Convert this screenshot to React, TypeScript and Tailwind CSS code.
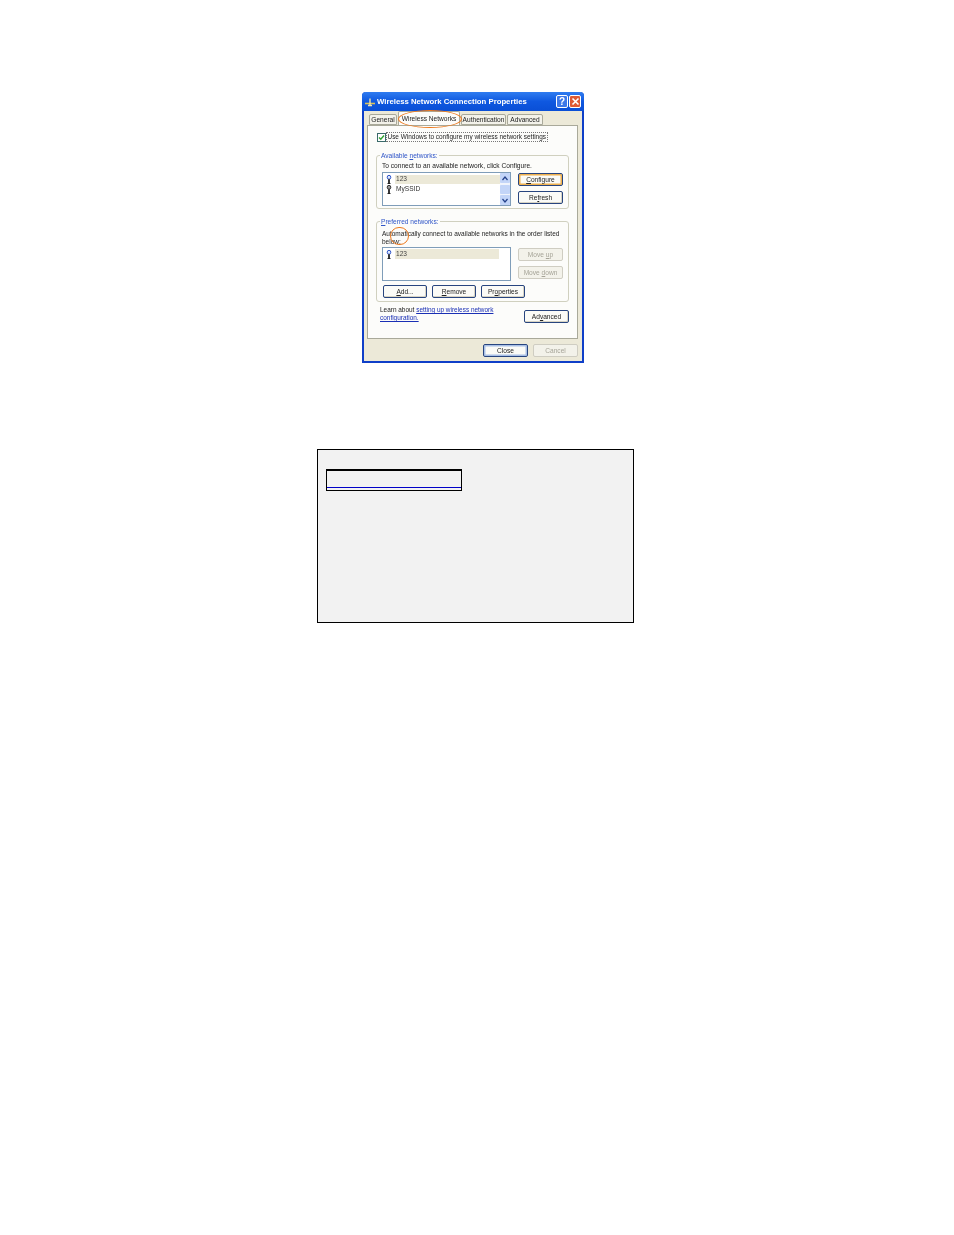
import type { ReactNode } from "react";

// petit bouton façon XP
function Btn({ label, ul, w = "w-[45px]", state = "normal", className = "" }: { label: string; ul?: number; w?: string; state?: "normal" | "hot" | "off" | "def"; className?: string }) {
  const border = state === "off" ? "border-[#cfcdc2] text-[#a6a498]" : "border-[#28457f] text-[#222]";
  const ring = state === "hot" ? "shadow-[inset_0_0_0_1.5px_#eeb04e]" : state === "def" ? "shadow-[inset_0_0_0_1.5px_#a9c0e6]" : state === "off" ? "" : "shadow-[inset_-1px_-1px_0_#d8d4c4]";
  return (
    <div className={`${w} h-[13px] rounded-[2px] border pt-[1px] ${border} ${ring} ${state === "off" ? "bg-[#f3f2ea]" : "bg-[#fbfbf7]"} flex items-center justify-center text-[6.6px] leading-none ${className}`}>
      {ul === undefined ? (
        <span>{label}</span>
      ) : (
        <span className="whitespace-pre">
          {label.slice(0, ul)}
          <span className="underline">{label[ul]}</span>
          {label.slice(ul + 1)}
        </span>
      )}
    </div>
  );
}

function Antenna({ blue }: { blue?: boolean }) {
  return (
    <svg width="6" height="9" viewBox="0 0 6 9" className="shrink-0">
      <ellipse cx="3" cy="2.3" rx="1.8" ry="2" fill={blue ? "#dbe6fb" : "#9a9a9a"} stroke={blue ? "#2f55c8" : "#333"} strokeWidth="1" />
      <path d="M3 4.3V8.5" stroke="#222" strokeWidth="1.8" />
      <path d="M1.5 8.5h3" stroke="#222" strokeWidth="1" />
    </svg>
  );
}

function Group({ title, ul, h, children, className = "" }: { title: string; ul: number; h: string; children: ReactNode; className?: string }) {
  return (
    <div className={`relative ${h} rounded-[3px] border border-[#d0d0bf] ${className}`}>
      <div className="absolute left-[3px] top-[-5px] whitespace-pre bg-[#fcfcfa] px-[1px] text-[6.6px] leading-[9px] text-[#2f55c8]">
        {title.slice(0, ul)}
        <span className="underline">{title[ul]}</span>
        {title.slice(ul + 1)}
      </div>
      {children}
    </div>
  );
}

function Tab({ label, w, active }: { label: string; w: string; active?: boolean }) {
  return (
    <div className={`${w} ${active ? "-mt-[2px] h-[14px] border-b-0 bg-[#fcfcfa]" : "h-[11px] bg-[#f3f2ea]"} mr-[1px] flex items-center justify-center whitespace-nowrap rounded-t-[2px] border border-[#a9a99a] pt-[1px] text-[6.6px] leading-none text-[#222]`}>
      {label}
    </div>
  );
}

export default function App() {
  return (
    <div className="relative h-[1235px] w-[954px] overflow-hidden bg-white pt-[92px] [font-family:'Liberation_Sans',Arial,sans-serif]">
      {/* capture de la boîte de dialogue */}
      <div className="relative ml-[362px] flex h-[271px] w-[222px] flex-col rounded-t-[4px] border-2 border-t-0 border-[#0f3fc8] bg-[#ece9d8] blur-[0.35px]">
        <div className="-mx-[2px] flex h-[19px] shrink-0 items-center rounded-t-[4px] bg-gradient-to-b from-[#2f7cf0] via-[#0f58e0] to-[#0a4fd6] pl-[3px] pr-[3px]">
          <svg width="10" height="10" viewBox="0 0 10 10" className="mr-[2px] shrink-0">
            <path d="M0 6.5h10" stroke="#d9c25a" strokeWidth="1.6" />
            <path d="M5 1.5v7M3 8.5h4" stroke="#f0e6b0" strokeWidth="1.4" />
          </svg>
          <span className="text-[7.75px] font-bold leading-none text-white">Wireless Network Connection Properties</span>
          <div className="ml-auto flex gap-[1px]">
            <div className="flex h-[13px] w-[12px] items-center justify-center rounded-[2px] border border-white bg-[#3d78e8] text-[10px] font-bold leading-none text-white">?</div>
            <div className="flex h-[13px] w-[12px] items-center justify-center rounded-[2px] border border-white bg-[#dd5a35]">
              <svg width="9" height="9" viewBox="0 0 9 9">
                <path d="M1.5 1.5l6 6M7.5 1.5l-6 6" stroke="#fff" strokeWidth="1.6" />
              </svg>
            </div>
          </div>
        </div>

        <div className="flex h-[14px] items-end pl-[5px] pt-[4px]">
          <Tab label="General" w="w-[28px]" />
          <Tab label="Wireless Networks" w="w-[62px]" active />
          <Tab label="Authentication" w="w-[45px]" />
          <Tab label="Advanced" w="w-[36px]" />
        </div>

        <div className="ml-[3px] h-[214px] w-[211px] border border-[#a9a99a] bg-[#fcfcfa] px-[8px] pt-[6px]">
          <div className="flex h-[10px] items-center pl-[1px]">
            <div className="flex h-[9px] w-[9px] items-center justify-center border border-[#3a6a6a] bg-white">
              <svg width="7" height="7" viewBox="0 0 7 7">
                <path d="M1 3.5l1.8 1.8L6 1.5" fill="none" stroke="#2fa52f" strokeWidth="1.4" />
              </svg>
            </div>
            <span className="border border-dotted border-[#777] px-[0.5px] text-[6.45px] leading-[8px] whitespace-nowrap text-[#222]">Use Windows to configure my wireless network settings</span>
          </div>

          <Group title="Available networks:" ul={10} h="h-[54px]" className="mt-[13px]">
            <div className="pl-[5px] pt-[5px] text-[6.6px] leading-[9px] text-[#222]">To connect to an available network, click Configure.</div>
            <div className="mt-[2px] flex pl-[5px]">
              <div className="flex h-[34px] w-[129px] border border-[#7f9db9] bg-white">
                <div className="flex-1 pl-[3px] pt-[1px]">
                  <div className="flex h-[10px] items-center text-[6.6px] leading-none text-[#444]">
                    <Antenna blue />
                    <span className="ml-[3px] flex h-[9px] flex-1 items-center bg-[#ece9d8] pl-[1px] pt-[1px]">123</span>
                  </div>
                  <div className="flex h-[10px] items-center text-[6.6px] leading-none text-[#333]">
                    <Antenna />
                    <span className="ml-[4px] pt-[1px]">MySSID</span>
                  </div>
                </div>
                <div className="flex w-[10px] flex-col justify-between bg-[#f0f4fc]">
                  <div className="flex h-[10px] items-center justify-center rounded-[1px] bg-[#c3d5f8]">
                    <svg width="6" height="5" viewBox="0 0 6 5"><path d="M0.5 4L3 1l2.5 3" fill="none" stroke="#23408a" strokeWidth="1.2" /></svg>
                  </div>
                  <div className="h-[9px] rounded-[1px] bg-[#c3d5f8]" />
                  <div className="flex h-[10px] items-center justify-center rounded-[1px] bg-[#c3d5f8]">
                    <svg width="6" height="5" viewBox="0 0 6 5"><path d="M0.5 1L3 4l2.5-3" fill="none" stroke="#23408a" strokeWidth="1.2" /></svg>
                  </div>
                </div>
              </div>
              <div className="ml-[7px] flex flex-col gap-[5px] pt-[1px]">
                <Btn label="Configure" ul={0} state="hot" />
                <Btn label="Refresh" ul={2} />
              </div>
            </div>
          </Group>

          <Group title="Preferred networks:" ul={0} h="h-[81px]" className="mt-[12px]">
            <div className="w-[185px] pl-[5px] pt-[8px] text-[6.5px] leading-[8px] text-[#222]">Automatically connect to available networks in the order listed below:</div>
            <div className="mt-[1px] flex pl-[5px]">
              <div className="h-[34px] w-[129px] border border-[#7f9db9] bg-white pl-[3px] pt-[1px]">
                <div className="flex h-[10px] items-center text-[6.6px] leading-none text-[#444]">
                  <Antenna blue />
                  <span className="ml-[3px] flex h-[10px] w-[104px] items-center bg-[#ece9d8] pl-[1px] pt-[1px]">123</span>
                </div>
              </div>
              <div className="ml-[7px] flex flex-col gap-[5px] pt-[1px]">
                <Btn label="Move up" ul={5} state="off" />
                <Btn label="Move down" ul={5} state="off" />
              </div>
            </div>
            <div className="mt-[4px] flex gap-[5px] pl-[6px]">
              <Btn label="Add..." ul={0} w="w-[44px]" />
              <Btn label="Remove" ul={0} w="w-[44px]" />
              <Btn label="Properties" ul={2} w="w-[44px]" />
            </div>
          </Group>

          <div className="mt-[4px] flex items-start pl-[4px]">
            <div className="w-[135px] text-[6.45px] leading-[8px] text-[#222]">
              <div>
                Learn about <span className="text-[#1a2fb5] underline">setting up wireless network</span>
              </div>
              <div className="text-[#1a2fb5] underline">configuration.</div>
            </div>
            <Btn label="Advanced" ul={2} w="w-[45px]" className="ml-[9px] mt-[4px]" />
          </div>
        </div>

        <div className="mt-[5px] flex justify-end gap-[5px] pr-[4px]">
          <Btn label="Close" w="w-[45px]" state="def" />
          <Btn label="Cancel" w="w-[45px]" state="off" />
        </div>

        {/* annotations orange par-dessus la capture */}
        <div className="absolute left-[34px] top-[18px] h-[18px] w-[64px] rounded-[50%] border-[1.5px] border-[#ee7a1e]" />
        <div className="absolute left-[26px] top-[135px] h-[18px] w-[19px] rounded-full border-[1.5px] border-[#ee7a1e]" />
      </div>

      <div className="ml-[317px] mt-[86px] h-[174px] w-[317px] border border-black bg-[#f2f2f2] pl-[8px] pt-[19px]">
        <div className="flex h-[22px] w-[136px] flex-col justify-end border border-t-2 border-black pb-[2px]">
          <div className="h-[1px] bg-[#0000c8]" />
        </div>
      </div>
    </div>
  );
}
